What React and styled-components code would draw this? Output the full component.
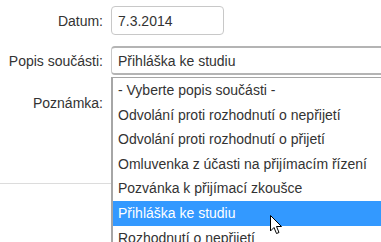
import React from "react";
import styled, { createGlobalStyle } from "styled-components";

const Global = createGlobalStyle`
  html, body { margin: 0; padding: 0; background: #fff; }
  body { font-family: "Liberation Sans", Arial, sans-serif; }
`;

const Page = styled.div`
  position: relative;
  width: 381px;
  height: 242px;
  overflow: hidden;
  background: #fff;
`;

const Form = styled.div`
  display: grid;
  grid-template-columns: 103px 1fr;
  column-gap: 8px;
  row-gap: 11px;
  padding-top: 6px;
  align-items: center;
`;

const Label = styled.label`
  justify-self: end;
  font-size: 14px;
  color: #333;
  align-self: ${(p) => (p.$top ? "start" : "center")};
  padding-top: ${(p) => (p.$top ? "9px" : "0")};
`;

const DateInput = styled.div`
  box-sizing: border-box;
  width: 113px;
  height: 29px;
  border: 1px solid #c8c8c8;
  border-radius: 4px;
  padding: 0 6px;
  display: flex;
  align-items: center;
  font-size: 14px;
  color: #333;
`;

const Select = styled.div`
  box-sizing: border-box;
  width: 290px;
  height: 29px;
  border: 1px solid #c8c8c8;
  border-top: 2px solid #b4b4b4;
  border-bottom: 2px solid #b4b4b4;
  border-radius: 4px 0 0 4px;
  padding: 0 6px;
  display: flex;
  align-items: center;
  font-size: 14px;
  color: #333;
`;

const NoteArea = styled.div`
  height: 80px;
`;

const Divider = styled.hr`
  margin: 0;
  margin-top: 17px;
  border: none;
  border-top: 1px solid #dcdcdc;
`;

const List = styled.ul`
  position: absolute;
  left: 111px;
  top: 77px;
  width: 290px;
  margin: 0;
  padding: 0;
  list-style: none;
  background: #fff;
  border-left: 2px solid #a6a6a6;
  border-top: 1px solid #a6a6a6;
`;

const Option = styled.li`
  box-sizing: border-box;
  height: 24.6px;
  line-height: 24.6px;
  padding-left: 5px;
  font-size: 14px;
  white-space: nowrap;
  color: ${(p) => (p.$selected ? "#fff" : "#333")};
  background: ${(p) => (p.$selected ? "#3399ff" : "transparent")};
`;

const Cursor = styled.svg`
  position: absolute;
  left: 270px;
  top: 215px;
`;

const options = [
  "- Vyberte popis součásti -",
  "Odvolání proti rozhodnutí o nepřijetí",
  "Odvolání proti rozhodnutí o přijetí",
  "Omluvenka z účasti na přijímacím řízení",
  "Pozvánka k přijímací zkoušce",
  "Přihláška ke studiu",
  "Rozhodnutí o nepřijetí",
];

export default function App() {
  return (
    <Page>
      <Global />
      <Form>
        <Label>Datum:</Label>
        <DateInput>7.3.2014</DateInput>
        <Label>Popis součásti:</Label>
        <Select>Přihláška ke studiu</Select>
        <Label $top>Poznámka:</Label>
        <NoteArea />
      </Form>
      <Divider />
      <List>
        {options.map((o) => (
          <Option key={o} $selected={o === "Přihláška ke studiu"}>
            {o}
          </Option>
        ))}
      </List>
      <Cursor width="13" height="20" viewBox="0 0 13 20">
        <path
          d="M0.5 0.5 L0.5 16 L4 12.5 L6.5 18.5 L9 17.5 L6.5 11.5 L11.5 11.5 Z"
          fill="#fff"
          stroke="#000"
          strokeWidth="1"
          strokeLinejoin="miter"
        />
      </Cursor>
    </Page>
  );
}
